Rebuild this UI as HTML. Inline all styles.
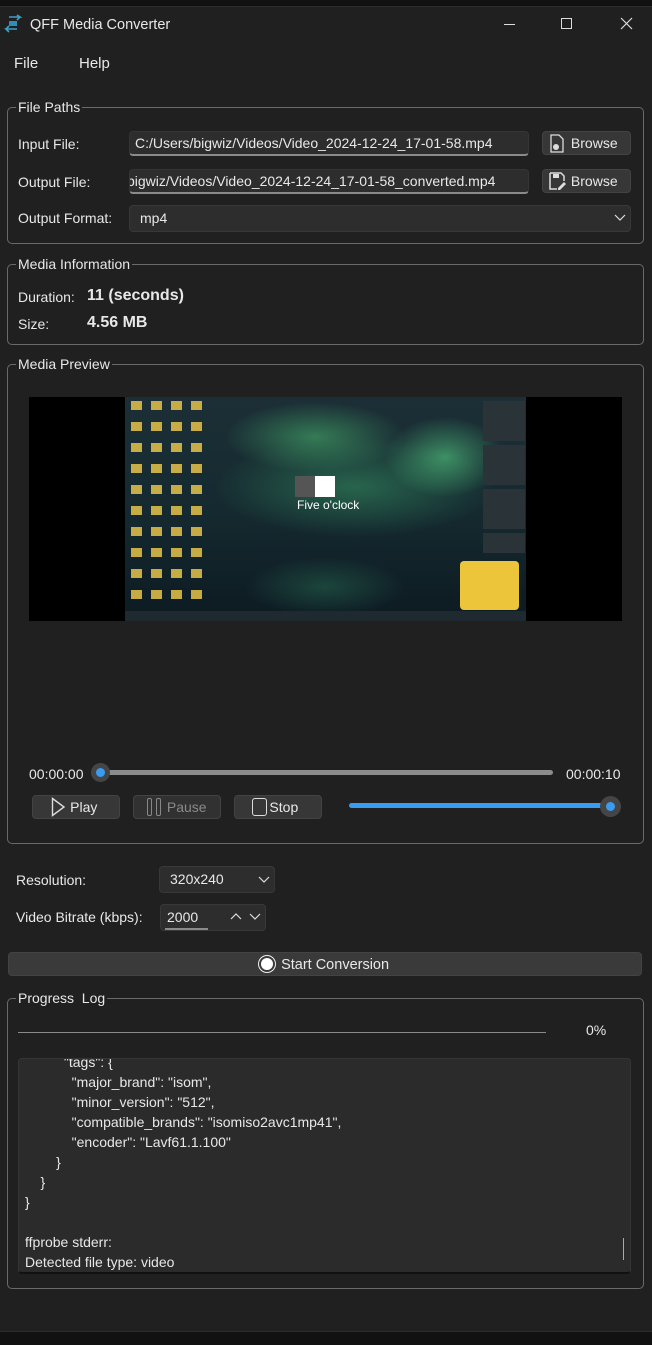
<!DOCTYPE html>
<html><head><meta charset="utf-8"><style>
*{margin:0;padding:0;box-sizing:border-box}
body{width:652px;height:1345px;background:#111;font-family:"Liberation Sans",sans-serif;font-size:14px;color:#e8e8e8;position:relative;overflow:hidden}
.win{position:absolute;left:0;top:6px;width:652px;height:1326px;background:#202020;border-top:1px solid #2c2c2c;border-bottom:1px solid #2c2c2c}
.a{position:absolute;white-space:nowrap}
.grp{position:absolute;border:1px solid #6a6a6a;border-radius:5px}
.lg{position:absolute;background:#202020;padding:0 2px;top:-10px;left:8px;font-size:14px;line-height:18px}
.inp{position:absolute;background:#2d2d2d;border:1px solid #353535;border-radius:4px;border-bottom:2px solid #8a8a8a;overflow:hidden;padding-left:6px;line-height:22px}
.btn{position:absolute;background:#373737;border:1px solid #434343;border-radius:4px;text-align:center;line-height:22px}
.combo{position:absolute;background:#2d2d2d;border:1px solid #383838;border-radius:4px;line-height:24px;padding-left:10px}
</style></head><body>
<div class="win"></div>
<svg class="a" style="left:3px;top:14px" width="20" height="20" viewBox="0 0 20 20"><path d="M6 3h11l-3-2M17 3l-3 3" stroke="#3aa0c8" stroke-width="1.6" fill="none"/><path d="M14 15H3l3 3M3 15l3-3" stroke="#3aa0c8" stroke-width="1.6" fill="none"/><rect x="6" y="7" width="8" height="5" fill="#2d8fb8"/></svg>
<div class="a" style="left:30px;top:17px;font-size:14.5px">QFF Media Converter</div>
<div class="a" style="left:504px;top:24px;width:11px;height:1px;background:#ddd"></div>
<div class="a" style="left:561px;top:18px;width:11px;height:11px;border:1px solid #ddd"></div>
<svg class="a" style="left:620px;top:17px" width="13" height="13"><path d="M1 1L12 12M12 1L1 12" stroke="#ddd" stroke-width="1.2"/></svg>
<div class="a" style="left:14px;top:55px;font-size:15px">File</div>
<div class="a" style="left:79px;top:55px;font-size:15px">Help</div>

<div class="grp" style="left:7px;top:107px;width:637px;height:137px"><div class="lg">File Paths</div></div>
<div class="a" style="left:18px;top:136px">Input File:</div>
<div class="inp" style="left:129px;top:131px;width:400px;height:25px;padding-left:5px">C:/Users/bigwiz/Videos/Video_2024-12-24_17-01-58.mp4</div>
<div class="btn" style="left:542px;top:131px;width:89px;height:24px">&nbsp;&nbsp;&nbsp;&nbsp;Browse</div>
<svg class="a" style="left:549px;top:134px" width="16" height="19"><path d="M2 1h8l4 4v13H2z" stroke="#ddd" fill="none" stroke-width="1.3"/><circle cx="7" cy="13" r="3" fill="#ddd"/></svg>
<div class="a" style="left:18px;top:174px">Output File:</div>
<div class="inp" style="left:129px;top:169px;width:400px;height:25px;padding-left:0"><span style="margin-left:-3px">bigwiz/Videos/Video_2024-12-24_17-01-58_converted.mp4</span></div>
<div class="btn" style="left:542px;top:169px;width:89px;height:24px">&nbsp;&nbsp;&nbsp;&nbsp;Browse</div>
<svg class="a" style="left:549px;top:172px" width="17" height="18"><path d="M1 1h11l3 3v5M1 1v16h7" stroke="#ddd" fill="none" stroke-width="1.5"/><rect x="4" y="2" width="6" height="4" fill="#ddd"/><path d="M9 16l6-6 2 2-6 6h-2z" fill="#ddd"/></svg>
<div class="a" style="left:18px;top:210px">Output Format:</div>
<div class="combo" style="left:129px;top:205px;width:502px;height:27px">mp4</div>
<svg class="a" style="left:614px;top:214px" width="12" height="8"><path d="M1 1l5 5 5-5" stroke="#ddd" fill="none" stroke-width="1.2"/></svg>

<div class="grp" style="left:7px;top:264px;width:637px;height:81px"><div class="lg">Media Information</div></div>
<div class="a" style="left:18px;top:289px">Duration:</div>
<div class="a" style="left:87px;top:287px;font-weight:bold;font-size:16px">11 (seconds)</div>
<div class="a" style="left:18px;top:316px">Size:</div>
<div class="a" style="left:87px;top:314px;font-weight:bold;font-size:16px">4.56 MB</div>

<div class="grp" style="left:7px;top:364px;width:637px;height:480px"><div class="lg">Media Preview</div></div>
<div class="a" style="left:29px;top:397px;width:593px;height:224px;background:#000"></div>
<div class="a" style="left:125px;top:397px;width:401px;height:224px;overflow:hidden;background:
radial-gradient(ellipse 60px 40px at 320px 60px,rgba(90,220,140,.55),transparent),
radial-gradient(ellipse 90px 35px at 190px 40px,rgba(80,200,120,.5),transparent),
radial-gradient(ellipse 140px 50px at 230px 90px,rgba(60,170,110,.45),transparent),
radial-gradient(ellipse 80px 30px at 200px 190px,rgba(50,140,100,.35),transparent),
linear-gradient(#1c2f36,#152a30 50%,#0d1a22)">
<div class="a" style="left:170px;top:79px;width:40px;height:21px;background:#fff"></div>
<div class="a" style="left:170px;top:79px;width:20px;height:21px;background:#555"></div>
<div class="a" style="left:172px;top:101px;font-size:12px;color:#fff">Five o'clock</div>
<div class="a" style="left:335px;top:164px;width:59px;height:49px;background:#ecc53a;border-radius:4px"></div>
<div class="a" style="left:358px;top:4px;width:42px;height:152px;background:repeating-linear-gradient(#2a3438 0 40px,transparent 40px 44px)"></div>
<div class="a" style="left:0;top:214px;width:401px;height:10px;background:#1e2a30"></div>
<div class="a" style="left:6px;top:4px;width:72px;height:210px;background:repeating-linear-gradient(90deg,#e7c44a 0 11px,transparent 11px 20px);-webkit-mask:repeating-linear-gradient(#000 0 9px,transparent 9px 21px);mask:repeating-linear-gradient(#000 0 9px,transparent 9px 21px);opacity:.85"></div>
</div>
<div class="a" style="left:29px;top:766px">00:00:00</div>
<div class="a" style="left:100px;top:770px;width:453px;height:5px;background:#8c8c8c;border-radius:3px"></div>
<div class="a" style="left:91px;top:763px;width:19px;height:19px;border-radius:50%;background:#454545"></div>
<div class="a" style="left:96px;top:768px;width:9px;height:9px;border-radius:50%;background:#3a9cf0"></div>
<div class="a" style="left:566px;top:766px">00:00:10</div>
<div class="btn" style="left:32px;top:795px;width:88px;height:24px">&nbsp;&nbsp;&nbsp;&nbsp;Play</div>
<svg class="a" style="left:51px;top:797px" width="15" height="20"><path d="M1.5 1.5L13 10 1.5 18.5z" stroke="#ddd" fill="none" stroke-width="1.4"/></svg>
<div class="btn" style="left:133px;top:795px;width:88px;height:24px;color:#8a8a8a;background:#313131">&nbsp;&nbsp;&nbsp;&nbsp;&nbsp;Pause</div>
<div class="a" style="left:147px;top:798px;width:5px;height:18px;border:1px solid #888;border-radius:2px"></div>
<div class="a" style="left:156px;top:798px;width:5px;height:18px;border:1px solid #888;border-radius:2px"></div>
<div class="btn" style="left:234px;top:795px;width:88px;height:24px">&nbsp;&nbsp;&nbsp;Stop</div>
<div class="a" style="left:252px;top:798px;width:15px;height:18px;border:1.5px solid #ddd;border-radius:3px"></div>
<div class="a" style="left:349px;top:803px;width:264px;height:5px;background:#3a9cf0;border-radius:3px"></div>
<div class="a" style="left:600px;top:796px;width:21px;height:21px;border-radius:50%;background:#454545"></div>
<div class="a" style="left:606px;top:802px;width:9px;height:9px;border-radius:50%;background:#3a9cf0"></div>

<div class="a" style="left:16px;top:872px">Resolution:</div>
<div class="combo" style="left:159px;top:866px;width:116px;height:27px">320x240</div>
<svg class="a" style="left:258px;top:876px" width="12" height="8"><path d="M1 1l5 5 5-5" stroke="#ddd" fill="none" stroke-width="1.2"/></svg>
<div class="a" style="left:16px;top:909px">Video Bitrate (kbps):</div>
<div class="combo" style="left:160px;top:904px;width:106px;height:27px;padding-left:6px">2000</div>
<div class="a" style="left:165px;top:928px;width:43px;height:2px;background:#8a8a8a"></div>
<svg class="a" style="left:230px;top:913px" width="36" height="8"><path d="M1 6l5-5 5 5M20 1l5 5 5-5" stroke="#ddd" fill="none" stroke-width="1.2"/></svg>
<div class="btn" style="left:8px;top:952px;width:634px;height:24px;line-height:24px;background:#3a3a3a;font-size:14.5px">&nbsp;&nbsp;&nbsp;&nbsp;&nbsp;Start Conversion</div>
<div class="a" style="left:258px;top:955px;width:18px;height:18px;border-radius:50%;border:1.5px solid #eee"></div>
<div class="a" style="left:261px;top:958px;width:12px;height:12px;border-radius:50%;background:#fff"></div>

<div class="grp" style="left:7px;top:998px;width:637px;height:291px"><div class="lg">Progress&nbsp; Log</div></div>
<div class="a" style="left:18px;top:1032px;width:528px;height:1px;background:#8a8a8a"></div>
<div class="a" style="left:586px;top:1022px">0%</div>
<div class="a" style="left:18px;top:1058px;width:613px;height:216px;background:#2b2b2b;border:1px solid #353535;border-radius:4px;border-bottom:2px solid #111;overflow:hidden;line-height:20px;padding-left:6px">
<div style="margin-top:-7px;white-space:pre">          "tags": {
            "major_brand": "isom",
            "minor_version": "512",
            "compatible_brands": "isomiso2avc1mp41",
            "encoder": "Lavf61.1.100"
        }
    }
}

ffprobe stderr:
Detected file type: video</div></div>
<div class="a" style="left:623px;top:1238px;width:1px;height:22px;background:#aaa"></div>
</body></html>
